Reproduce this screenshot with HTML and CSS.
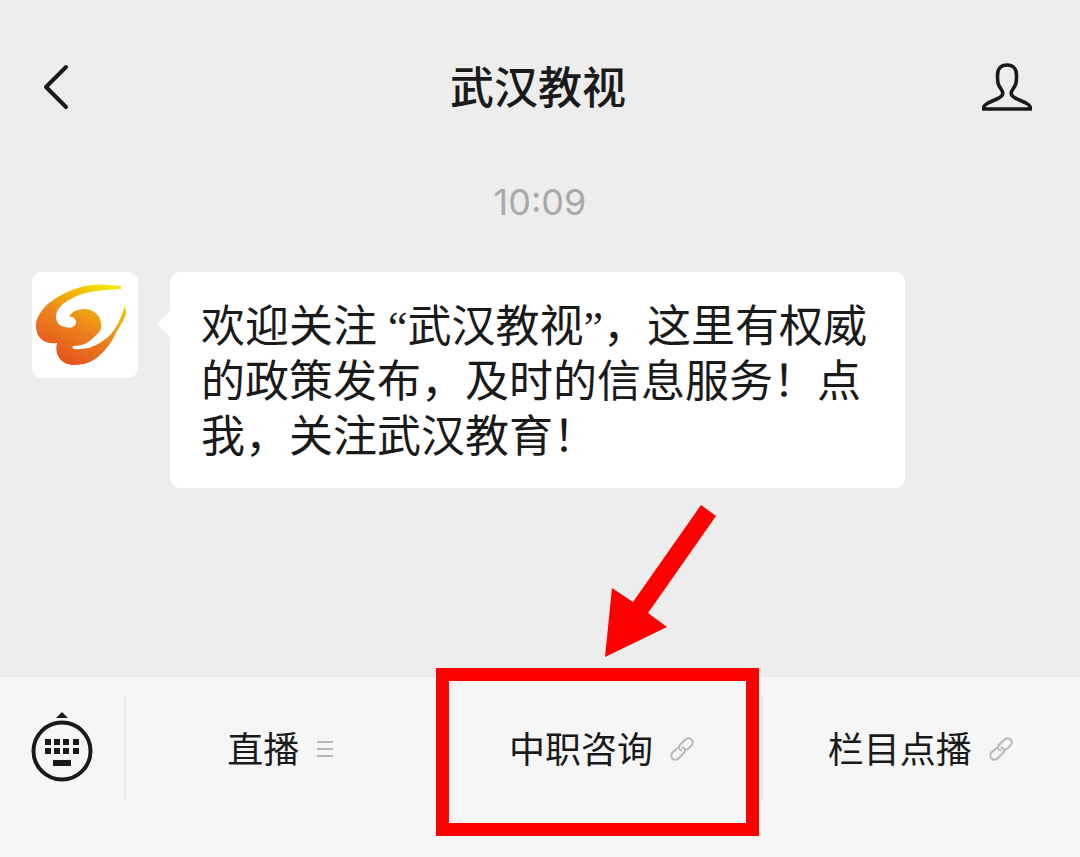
FILE: index.html
```
<!DOCTYPE html>
<html lang="zh-CN">
<head>
  <meta charset="UTF-8">
  <meta name="viewport" content="width=device-width, initial-scale=1">
  <title>武汉教视</title>
  <link rel="stylesheet" href="styles.css">
</head>
<body>

  <header class="header">
    <button class="icon-btn" type="button" aria-label="返回">
      <svg width="50" height="50" viewBox="0 0 50 50" fill="none" stroke="#1a1a1a" stroke-width="4" stroke-linecap="round" stroke-linejoin="round">
        <path d="M34 4L14 24L34 44"/>
      </svg>
    </button>
    <h1 class="title">武汉教视</h1>
    <button class="icon-btn" type="button" aria-label="公众号资料">
      <svg width="50" height="50" viewBox="0 0 50 50" fill="none" stroke="#1a1a1a" stroke-width="3.600" stroke-linejoin="round">
        <path d="M25 2C19 2 15.500 6 15.500 12C15.500 20 16 22 19 26C22 30 21 33 17 35L6 40C3 41.500 1.500 43 1.500 46H48.500C48.500 43 47 41.500 44 40L33 35C29 33 28 30 31 26C34 22 34.500 20 34.500 12C34.500 6 31 2 25 2Z"/>
      </svg>
    </button>
  </header>

  <main class="chat">
    <time class="time">10:09</time>

    <div class="message">
      <div class="avatar">
        <svg viewBox="0 0 106 106" role="img" aria-label="武汉教视">
          <defs>
            <linearGradient id="flame" x1="0.85" y1="0.05" x2="0.3" y2="1">
              <stop offset="0" stop-color="#f3e600"/>
              <stop offset="0.25" stop-color="#f2b40c"/>
              <stop offset="0.55" stop-color="#ec811c"/>
              <stop offset="1" stop-color="#e4501f"/>
            </linearGradient>
          </defs>
          <path fill="url(#flame)" d="M89 14C76 13 68 12 60 13C50 14 41 17 33 21C24 26 17 30 12 36C7 42 4 47 4 54C4 66 13 73 25 71C22 84 30 93 42 93C54 93 62 89 68 83C77 75 81 67 85 59C90 51 94 45 94 40C94 37 93 35 93 34C90 42 88 49 84 55C81 60 77 65 72 68C63 75 53 78 42 77C40 76 40 75 41 74C52 74 59 69 62 65C68 60 70 57 69 51C68 43 62 38 54 37C46 37 40 39 37 45C40 44 44 46 44 50C44 55 38 57 33 55C27 54 24 50 24 45C24 37 31 31 39 27C51 20 65 18 89 17Z"/>
        </svg>
      </div>
      <p class="bubble">欢迎关注 “武汉教视”，这里有权威的政策发布，及时的信息服务！点我，关注武汉教育！</p>
    </div>
  </main>

  <nav class="menu">
    <div class="keyboard">
      <button class="icon-btn" type="button" aria-label="切换键盘">
        <svg width="62" height="72" viewBox="0 0 62 72" fill="#1a1a1a">
          <path d="M31 0L37 6H25Z"/>
          <circle cx="31" cy="39" r="28.500" fill="none" stroke="#1a1a1a" stroke-width="4"/>
          <path d="M14 27h6v6h-6zM23 27h6v6h-6zM32 27h6v6h-6zM42 27h6v6h-6zM14 36h6v6h-6zM23 36h6v6h-6zM32 36h6v6h-6zM42 36h6v6h-6zM22 48h18v6h-18z"/>
        </svg>
      </button>
    </div>

    <div class="menu-cell">
      <button class="menu-item" type="button">
        直播
        <svg width="24" height="26" viewBox="0 0 24 26" stroke="#b8b8b8" stroke-width="2">
          <path d="M2 6H18M2 13H18M2 20H18"/>
        </svg>
      </button>
    </div>

    <div class="menu-cell">
      <a class="menu-item" href="#">
        中职咨询
        <svg width="26" height="26" viewBox="0 0 26 26" fill="none" stroke="#b8b8b8" stroke-width="2" stroke-linecap="round">
          <path d="M12.500 14.500C9.500 13.500 9 11 11 9L16 4C18 2 20.500 1.500 22.500 3.500C24.500 5.500 24 8 22 10L18 13.500"/>
          <path d="M13.500 11.500C16.500 12.500 17 15 15 17L10 22C8 24 5.500 24.500 3.500 22.500C1.500 20.500 2 18 4 16L8 12.500"/>
        </svg>
      </a>
      <div class="highlight"></div>
      <svg class="arrow" width="112" height="152" viewBox="0 0 112 152" fill="#ff0000">
        <path d="M96 0L111 11L43 108L62 122L0 152L7 83L28 97Z"/>
      </svg>
    </div>

    <div class="menu-cell">
      <a class="menu-item" href="#">
        栏目点播
        <svg width="26" height="26" viewBox="0 0 26 26" fill="none" stroke="#b8b8b8" stroke-width="2" stroke-linecap="round">
          <path d="M12.500 14.500C9.500 13.500 9 11 11 9L16 4C18 2 20.500 1.500 22.500 3.500C24.500 5.500 24 8 22 10L18 13.500"/>
          <path d="M13.500 11.500C16.500 12.500 17 15 15 17L10 22C8 24 5.500 24.500 3.500 22.500C1.500 20.500 2 18 4 16L8 12.500"/>
        </svg>
      </a>
    </div>
  </nav>

</body>
</html>
```
FILE: styles.css
```
* {
  box-sizing: border-box;
}

body {
  display: flex;
  flex-direction: column;
  min-height: 100vh;
  margin: 0;
  background: #ededed;
  color: #1a1a1a;
  font-family: Inter, "Noto Sans CJK SC", sans-serif;
}

.icon-btn {
  display: flex;
  padding: 0;
  border: none;
  background: none;
  cursor: pointer;
}

.header {
  display: flex;
  justify-content: space-between;
  align-items: center;
  padding: 60px 48px 0 32px;
}

.header .icon-btn:first-child {
  width: 62px;
}

.title {
  margin: 0;
  font-size: 44px;
  font-weight: 500;
  line-height: 56px;
}

.chat {
  flex: 1;
  display: flex;
  flex-direction: column;
  padding: 64px 32px 32px;
}

.time {
  align-self: center;
  color: #a9a9a9;
  font-size: 36px;
  line-height: 44px;
}

.message {
  display: flex;
  align-items: flex-start;
  gap: 32px;
  margin-top: 48px;
}

.avatar {
  flex: none;
  width: 106px;
  height: 106px;
  border-radius: 10px;
  background: #fff;
}

.avatar svg {
  display: block;
}

/* Liberation Serif is only there for the curly quotes */
.bubble {
  position: relative;
  max-width: 735px;
  margin: 0;
  padding: 28px 24px 23px 31px;
  border-radius: 10px;
  background: #fff;
  font-family: "Liberation Serif", "Noto Sans CJK SC", sans-serif;
  font-size: 44px;
  line-height: 55px;
}

.bubble::before {
  content: "";
  position: absolute;
  top: 38px;
  left: -13px;
  border: 14px solid transparent;
  border-left: none;
  border-right: 14px solid #fff;
}

.menu {
  display: flex;
  padding: 19px 0 57px;
  border-top: 2px solid #e8e8e8;
  background: #f6f6f6;
}

.keyboard {
  display: flex;
  justify-content: center;
  align-items: center;
  width: 124px;
}

.menu-cell {
  position: relative;
  flex: 1;
  border-left: 2px solid #ebebeb;
}

.menu-item {
  display: flex;
  justify-content: center;
  align-items: center;
  gap: 16px;
  width: 100%;
  height: 104px;
  padding: 0 2px 2px 0;
  border: none;
  background: none;
  color: #1a1a1a;
  font-family: inherit;
  font-size: 36px;
  text-decoration: none;
  cursor: pointer;
}

.menu-item svg {
  margin-top: 4px;
}

/* red callout over the middle entry */
.highlight {
  position: absolute;
  top: -28px;
  right: 2px;
  bottom: -36px;
  left: -9px;
  border: 13px solid #ff0000;
  pointer-events: none;
}

.arrow {
  position: absolute;
  bottom: 143px;
  left: 50%;
  margin-left: 2px;
  pointer-events: none;
}
```
